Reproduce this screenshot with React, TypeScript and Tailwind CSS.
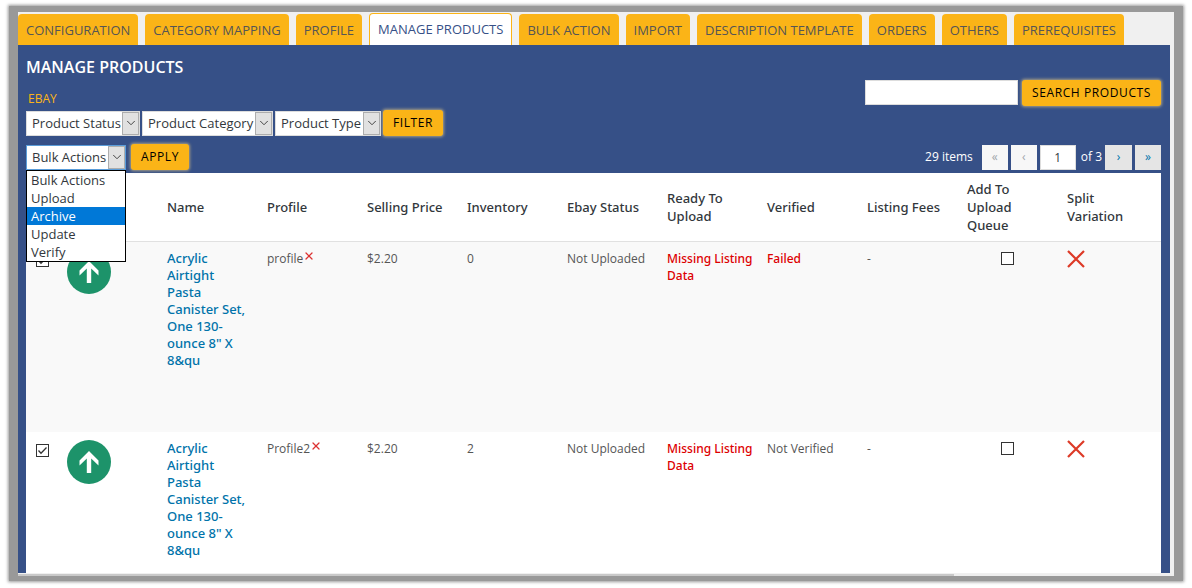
import React, { useState } from 'react';
import { ChevronDown, X } from 'lucide-react';

const tabs = [
  'CONFIGURATION',
  'CATEGORY MAPPING',
  'PROFILE',
  'MANAGE PRODUCTS',
  'BULK ACTION',
  'IMPORT',
  'DESCRIPTION TEMPLATE',
  'ORDERS',
  'OTHERS',
  'PREREQUISITES',
];

const columns = [
  'Name',
  'Profile',
  'Selling Price',
  'Inventory',
  'Ebay Status',
  'Ready To Upload',
  'Verified',
  'Listing Fees',
  'Add To Upload Queue',
  'Split Variation',
];

const bulkActions = ['Bulk Actions', 'Upload', 'Archive', 'Update', 'Verify'];

const products = [
  { id: 1, profile: 'profile', price: '$2.20', inventory: 0, verified: 'Failed' },
  { id: 2, profile: 'Profile2', price: '$2.20', inventory: 2, verified: 'Not Verified' },
];

const SelectBox: React.FC<{ label: string; options: string[]; active?: boolean }> = ({ label, options, active }) => (
  <div
    className={`relative inline-flex h-[25px] border bg-white ${active ? 'border-[#5b9dd9]' : 'border-[#dddddd]'}`}
  >
    <select
      aria-label={label}
      className="appearance-none bg-transparent pl-[5px] pr-[18px] text-[13px] leading-[23px] text-[#32373c] outline-none"
    >
      {options.map(option => (
        <option key={option}>{option}</option>
      ))}
    </select>
    <span className="pointer-events-none absolute inset-y-0 right-0 flex w-[17px] items-center justify-center border border-[#adadad] bg-[#e1e1e1]">
      <ChevronDown className="h-[14px] w-[14px] shrink-0 text-[#444]" strokeWidth={1.7} />
    </span>
  </div>
);

const ActionButton: React.FC<{ children: React.ReactNode }> = ({ children }) => (
  <button className="h-[26px] rounded-[3px] bg-[#fbb417] px-[10px] text-[12px] leading-[26px] tracking-wider whitespace-nowrap text-black shadow-[0_0_3px_1px_#a79f86]">
    {children}
  </button>
);

const CheckBox: React.FC<{ label: string; checked?: boolean }> = ({ label, checked }) => (
  <span className="relative inline-block h-[13px] w-[13px] align-top">
    <input
      type="checkbox"
      aria-label={label}
      defaultChecked={checked}
      className="peer block h-[13px] w-[13px] appearance-none border border-[#333] bg-white"
    />
    <svg
      viewBox="0 0 13 13"
      className="pointer-events-none absolute inset-0 hidden h-[13px] w-[13px] peer-checked:block"
      fill="none"
      stroke="#333"
      strokeWidth="1.3"
    >
      <path d="M2.5 6.5 L5 9.2 L10.5 3.5" />
    </svg>
  </span>
);

const App: React.FC = () => {
  const [activeTab, setActiveTab] = useState('MANAGE PRODUCTS');

  return (
    <div className="bg-white px-[9px] pt-[6px] pb-[7px] font-['Open_Sans','Noto_Sans',sans-serif] text-[12px] text-[#555]">
      <div className="bg-[#999] px-[9px] pt-[6px] pb-[5px] shadow-[0_0_3px_1px_#999]">
        <div className="bg-[#f0f0f0]">
          <nav className="flex h-[33px] items-end gap-[7px]">
            {tabs.map(tab => (
              <button
                key={tab}
                onClick={() => setActiveTab(tab)}
                className={
                  tab === activeTab
                    ? 'h-8 rounded-t-[4px] border border-b-0 border-[#fbb417] bg-white px-2 text-[13px] whitespace-nowrap text-[#365087]'
                    : 'h-[31px] rounded-t-[4px] bg-[#fbb417] px-2 pt-[2px] text-[13px] whitespace-nowrap text-[#555]'
                }
              >
                {tab}
              </button>
            ))}
          </nav>

          <main className="mr-1 bg-[#365087] pr-[9px] pl-2">
            <header className="flex items-start justify-between">
              <div className="pt-[11px]">
                <h1 className="text-[16px] leading-[22px] font-semibold text-white">MANAGE PRODUCTS</h1>
                <h2 className="mt-3 mb-[2px] ml-[2px] text-[12px] leading-[18px] text-[#fbb417]">EBAY</h2>
              </div>
              <div className="flex gap-1 pt-[35px]">
                <input
                  type="text"
                  aria-label="Search products"
                  className="h-[25px] w-[153px] border border-[#ddd] bg-white px-1 text-[13px] outline-none"
                />
                <ActionButton>SEARCH PRODUCTS</ActionButton>
              </div>
            </header>

            <div className="flex items-center gap-[2px]">
              <SelectBox label="Product status" options={['Product Status']} />
              <SelectBox label="Product category" options={['Product Category']} />
              <SelectBox label="Product type" options={['Product Type']} />
              <ActionButton>FILTER</ActionButton>
            </div>

            <div className="flex items-center justify-between pt-2 pb-[3px]">
              <div className="flex items-center gap-[5px]">
                <div className="relative flex">
                  <SelectBox label="Bulk actions" options={['Bulk Actions']} active />
                  <ul
                    role="listbox"
                    aria-label="Bulk actions list"
                    className="absolute top-[25px] left-0 z-10 w-full border border-black bg-white text-[13px] leading-[18px] text-[#32373c]"
                  >
                    {bulkActions.map(action => (
                      <li
                        key={action}
                        role="option"
                        aria-selected={action === 'Archive'}
                        className={action === 'Archive' ? 'bg-[#0078d7] pl-1 text-white' : 'pl-1'}
                      >
                        {action}
                      </li>
                    ))}
                  </ul>
                </div>
                <ActionButton>APPLY</ActionButton>
              </div>

              <div className="flex items-center gap-[3px] text-white">
                <span className="mr-[6px]">29 items</span>
                <button disabled className="h-[25px] w-[26px] bg-[#f7f7f7] text-[#a0a5aa]">«</button>
                <button disabled className="h-[25px] w-[26px] bg-[#f7f7f7] text-[#a0a5aa]">‹</button>
                <input
                  aria-label="Current page"
                  defaultValue="1"
                  className="h-[25px] w-9 border border-[#ddd] bg-white text-center text-[#32373c]"
                />
                <span className="pl-[2px]">of 3</span>
                <button className="h-[25px] w-[27px] bg-[#e5e5e5] text-[#0073aa]">›</button>
                <button className="h-[25px] w-[26px] bg-[#e5e5e5] text-[#0073aa]">»</button>
              </div>
            </div>

            <table className="w-full table-fixed border-collapse bg-white text-left">
              <thead>
                <tr className="h-[68px] border-b border-[#e1e1e1] font-['Noto_Sans','Open_Sans',sans-serif] text-[13px] leading-[18px] text-[#32373c]">
                  <th className="w-[31px]" />
                  <th className="w-[100px]" />
                  {columns.map(column => (
                    <th key={column} className="w-[100px] pr-1 pl-[10px] font-medium last:w-auto last:pr-9">
                      {column}
                    </th>
                  ))}
                </tr>
              </thead>
              <tbody className="leading-[17px]">
                {products.map(product => (
                  <tr key={product.id} className="align-top odd:h-[191px] odd:bg-[#f9f9f9]">
                    <td className="pt-3 pl-[10px]">
                      <CheckBox label={`Select product ${product.id}`} checked />
                    </td>
                    <td className="px-[10px] pt-2">
                      <svg viewBox="0 0 44 44" className="h-11 w-11">
                        <circle cx="22" cy="22" r="22" fill="#1d936a" />
                        <path
                          d="M22 11L31.500 20.500V25.500L24.200 18.500V33H19.800V18.500L12.500 25.500V20.500Z"
                          fill="#fff"
                        />
                      </svg>
                    </td>
                    <td className="px-[10px] pt-2 pb-[14px] font-['Noto_Sans','Open_Sans',sans-serif] text-[13px] font-medium text-[#0073aa]">
                      <a href="#product">Acrylic Airtight Pasta Canister Set, One 130-ounce 8" X 8&amp;qu</a>
                    </td>
                    <td className="px-[10px] py-2">
                      <span className="flex items-start">
                        {product.profile}
                        <button aria-label="Remove profile">
                          <X className="h-3 w-3 text-[#dc3232]" strokeWidth={2.5} />
                        </button>
                      </span>
                    </td>
                    <td className="px-[10px] py-2">{product.price}</td>
                    <td className="px-[10px] py-2">{product.inventory}</td>
                    <td className="px-[10px] py-2 whitespace-nowrap">Not Uploaded</td>
                    <td className="py-2 pl-[10px] font-['Noto_Sans','Open_Sans',sans-serif] font-medium text-[#dd0000]">
                      Missing Listing Data
                    </td>
                    <td
                      className={
                        product.verified === 'Failed'
                          ? "px-[10px] py-2 font-['Noto_Sans','Open_Sans',sans-serif] font-medium text-[#dd0000]"
                          : 'px-[10px] py-2'
                      }
                    >
                      {product.verified}
                    </td>
                    <td className="px-[10px] py-2">-</td>
                    <td className="px-[10px] pt-[10px] text-center">
                      <CheckBox label={`Queue product ${product.id}`} />
                    </td>
                    <td className="px-[10px] py-2">
                      <button aria-label="Split variation" className="block">
                        <svg viewBox="0 0 18 18" className="h-[18px] w-[18px]" fill="none" stroke="#dd3a27" strokeWidth="2.2">
                          <path d="M1 1L17 17M17 1L1 17" />
                        </svg>
                      </button>
                    </td>
                  </tr>
                ))}
              </tbody>
            </table>
          </main>

          <div className="mt-px h-[2px] bg-[#eee]">
            <div className="h-full w-[81%] bg-[#c9c9c9]" />
          </div>
        </div>
      </div>
    </div>
  );
};

export default App;
